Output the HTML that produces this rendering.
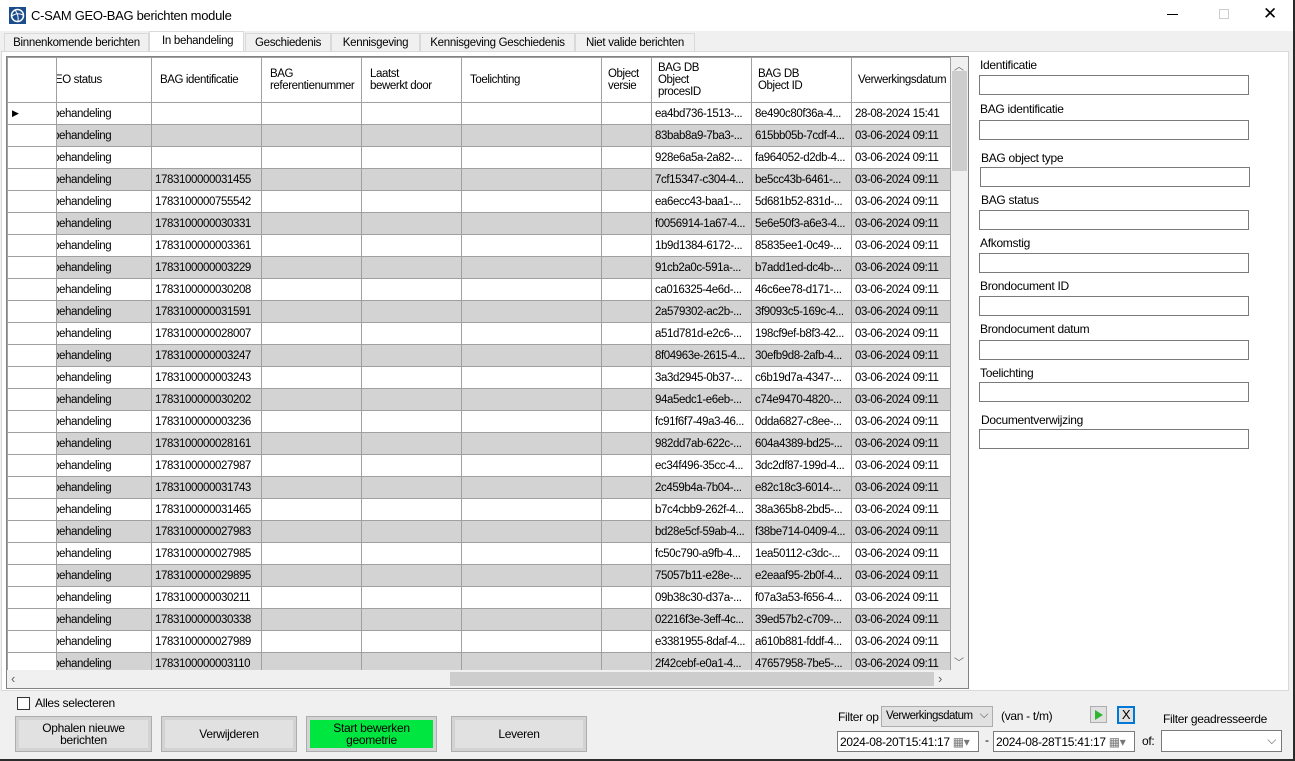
<!DOCTYPE html>
<html><head><meta charset="utf-8"><style>
*{box-sizing:border-box;margin:0;padding:0}
body{width:1295px;height:761px;position:relative;background:#f0f0f0;font-family:"Liberation Sans",sans-serif;font-size:12px;color:#000;overflow:hidden;letter-spacing:-0.3px}
.a{position:absolute}
#title{left:0;top:0;width:1295px;height:31px;background:#fff}
.tab{position:absolute;top:33px;height:18px;border:1px solid #d9d9d9;border-bottom:none;background:#f0f0f0;padding:3px 0 0 0;text-align:center;font-size:11.5px}
table{border-collapse:collapse;table-layout:fixed;position:absolute;left:7px;top:57px}
td{border:1px solid #a0a0a0;height:22px;padding:0 0 0 3px;white-space:nowrap;overflow:hidden;font-size:11.5px;letter-spacing:-0.4px}
th{border:1px solid #a0a0a0;height:45px;font-weight:normal;text-align:left;padding:0 0 0 8px;line-height:12px;font-size:11.5px;letter-spacing:-0.4px;vertical-align:middle;background:#fff;overflow:hidden;white-space:nowrap}
tr.g td{background:#d3d3d3}
td.rh{background:#fff!important;border-right:1px solid #a0a0a0}
td.c1{padding:0;text-indent:-4px}
.lbl{position:absolute;left:980px;font-size:12px}
.box{position:absolute;left:979px;width:270px;height:20px;border:1px solid #7a7a7a;background:#fff}
.btn{position:absolute;top:716px;height:36px;border:1px solid #adadad;background:#e1e1e1;outline:3px solid #d3d3d3;outline-offset:-4px;text-align:center;font-size:12px;line-height:12px;display:flex;align-items:center;justify-content:center}
</style></head><body>
<div class="a" id="title"></div>
<svg class="a" style="left:9px;top:7px" width="17" height="17" viewBox="0 0 17 17"><rect width="17" height="17" fill="#1b4d8c"/><circle cx="8.5" cy="8.5" r="6" fill="none" stroke="#fff" stroke-width="1.5"/><path d="M3 9 Q8 5 14 8 M6 3 Q10 8 9 15" stroke="#fff" fill="none"/></svg>
<div class="a" style="left:31px;top:8px;font-size:13px">C-SAM GEO-BAG berichten module</div>
<div class="a" style="left:1167px;top:14px;width:11px;height:1px;background:#000"></div>
<div class="a" style="left:1219px;top:9px;width:10px;height:10px;border:1px solid #ccc"></div>
<div class="a" style="left:1263px;top:4px;font-size:17px">✕</div>
<div class="tab" style="left:4px;width:145px">Binnenkomende berichten</div>
<div class="a" style="left:149px;top:31px;width:95px;height:21px;background:#fff;border:1px solid #d9d9d9;border-bottom:none;padding:3px 0 0 12px;font-size:11.5px">In behandeling</div>
<div class="tab" style="left:245px;width:86px">Geschiedenis</div>
<div class="tab" style="left:331px;width:89px">Kennisgeving</div>
<div class="tab" style="left:420px;width:155px">Kennisgeving Geschiedenis</div>
<div class="tab" style="left:575px;width:120px">Niet valide berichten</div>
<div class="a" style="left:1px;top:51px;width:1288px;height:640px;background:#fff;border:1px solid #d9d9d9"></div>
<div class="a" style="left:6px;top:56px;width:963px;height:633px;border:1px solid #828282;background:#fff"></div>
<table>
<colgroup><col style="width:49px"><col style="width:95px"><col style="width:110px"><col style="width:100px"><col style="width:100px"><col style="width:140px"><col style="width:50px"><col style="width:100px"><col style="width:100px"><col style="width:99px"></colgroup>
<tr><th></th><th style="padding-left:0;text-indent:-2px">EO status</th><th>BAG identificatie</th><th>BAG<br>referentienummer</th><th>Laatst<br>bewerkt door</th><th>Toelichting</th><th style="padding-left:6px">Object<br>versie</th><th style="padding-left:6px">BAG DB<br>Object<br>procesID</th><th style="padding-left:6px">BAG DB<br>Object ID</th><th style="padding-left:6px">Verwerkingsdatum</th></tr>
<tr><td class="rh" style="font-size:9px;padding-left:4px">▶</td><td class="c1">behandeling</td><td></td><td></td><td></td><td></td><td></td><td>ea4bd736-1513-...</td><td>8e490c80f36a-4...</td><td>28-08-2024 15:41</td></tr>
<tr class="g"><td class="rh"></td><td class="c1">behandeling</td><td></td><td></td><td></td><td></td><td></td><td>83bab8a9-7ba3-...</td><td>615bb05b-7cdf-4...</td><td>03-06-2024 09:11</td></tr>
<tr><td class="rh"></td><td class="c1">behandeling</td><td></td><td></td><td></td><td></td><td></td><td>928e6a5a-2a82-...</td><td>fa964052-d2db-4...</td><td>03-06-2024 09:11</td></tr>
<tr class="g"><td class="rh"></td><td class="c1">behandeling</td><td>1783100000031455</td><td></td><td></td><td></td><td></td><td>7cf15347-c304-4...</td><td>be5cc43b-6461-...</td><td>03-06-2024 09:11</td></tr>
<tr><td class="rh"></td><td class="c1">behandeling</td><td>1783100000755542</td><td></td><td></td><td></td><td></td><td>ea6ecc43-baa1-...</td><td>5d681b52-831d-...</td><td>03-06-2024 09:11</td></tr>
<tr class="g"><td class="rh"></td><td class="c1">behandeling</td><td>1783100000030331</td><td></td><td></td><td></td><td></td><td>f0056914-1a67-4...</td><td>5e6e50f3-a6e3-4...</td><td>03-06-2024 09:11</td></tr>
<tr><td class="rh"></td><td class="c1">behandeling</td><td>1783100000003361</td><td></td><td></td><td></td><td></td><td>1b9d1384-6172-...</td><td>85835ee1-0c49-...</td><td>03-06-2024 09:11</td></tr>
<tr class="g"><td class="rh"></td><td class="c1">behandeling</td><td>1783100000003229</td><td></td><td></td><td></td><td></td><td>91cb2a0c-591a-...</td><td>b7add1ed-dc4b-...</td><td>03-06-2024 09:11</td></tr>
<tr><td class="rh"></td><td class="c1">behandeling</td><td>1783100000030208</td><td></td><td></td><td></td><td></td><td>ca016325-4e6d-...</td><td>46c6ee78-d171-...</td><td>03-06-2024 09:11</td></tr>
<tr class="g"><td class="rh"></td><td class="c1">behandeling</td><td>1783100000031591</td><td></td><td></td><td></td><td></td><td>2a579302-ac2b-...</td><td>3f9093c5-169c-4...</td><td>03-06-2024 09:11</td></tr>
<tr><td class="rh"></td><td class="c1">behandeling</td><td>1783100000028007</td><td></td><td></td><td></td><td></td><td>a51d781d-e2c6-...</td><td>198cf9ef-b8f3-42...</td><td>03-06-2024 09:11</td></tr>
<tr class="g"><td class="rh"></td><td class="c1">behandeling</td><td>1783100000003247</td><td></td><td></td><td></td><td></td><td>8f04963e-2615-4...</td><td>30efb9d8-2afb-4...</td><td>03-06-2024 09:11</td></tr>
<tr><td class="rh"></td><td class="c1">behandeling</td><td>1783100000003243</td><td></td><td></td><td></td><td></td><td>3a3d2945-0b37-...</td><td>c6b19d7a-4347-...</td><td>03-06-2024 09:11</td></tr>
<tr class="g"><td class="rh"></td><td class="c1">behandeling</td><td>1783100000030202</td><td></td><td></td><td></td><td></td><td>94a5edc1-e6eb-...</td><td>c74e9470-4820-...</td><td>03-06-2024 09:11</td></tr>
<tr><td class="rh"></td><td class="c1">behandeling</td><td>1783100000003236</td><td></td><td></td><td></td><td></td><td>fc91f6f7-49a3-46...</td><td>0dda6827-c8ee-...</td><td>03-06-2024 09:11</td></tr>
<tr class="g"><td class="rh"></td><td class="c1">behandeling</td><td>1783100000028161</td><td></td><td></td><td></td><td></td><td>982dd7ab-622c-...</td><td>604a4389-bd25-...</td><td>03-06-2024 09:11</td></tr>
<tr><td class="rh"></td><td class="c1">behandeling</td><td>1783100000027987</td><td></td><td></td><td></td><td></td><td>ec34f496-35cc-4...</td><td>3dc2df87-199d-4...</td><td>03-06-2024 09:11</td></tr>
<tr class="g"><td class="rh"></td><td class="c1">behandeling</td><td>1783100000031743</td><td></td><td></td><td></td><td></td><td>2c459b4a-7b04-...</td><td>e82c18c3-6014-...</td><td>03-06-2024 09:11</td></tr>
<tr><td class="rh"></td><td class="c1">behandeling</td><td>1783100000031465</td><td></td><td></td><td></td><td></td><td>b7c4cbb9-262f-4...</td><td>38a365b8-2bd5-...</td><td>03-06-2024 09:11</td></tr>
<tr class="g"><td class="rh"></td><td class="c1">behandeling</td><td>1783100000027983</td><td></td><td></td><td></td><td></td><td>bd28e5cf-59ab-4...</td><td>f38be714-0409-4...</td><td>03-06-2024 09:11</td></tr>
<tr><td class="rh"></td><td class="c1">behandeling</td><td>1783100000027985</td><td></td><td></td><td></td><td></td><td>fc50c790-a9fb-4...</td><td>1ea50112-c3dc-...</td><td>03-06-2024 09:11</td></tr>
<tr class="g"><td class="rh"></td><td class="c1">behandeling</td><td>1783100000029895</td><td></td><td></td><td></td><td></td><td>75057b11-e28e-...</td><td>e2eaaf95-2b0f-4...</td><td>03-06-2024 09:11</td></tr>
<tr><td class="rh"></td><td class="c1">behandeling</td><td>1783100000030211</td><td></td><td></td><td></td><td></td><td>09b38c30-d37a-...</td><td>f07a3a53-f656-4...</td><td>03-06-2024 09:11</td></tr>
<tr class="g"><td class="rh"></td><td class="c1">behandeling</td><td>1783100000030338</td><td></td><td></td><td></td><td></td><td>02216f3e-3eff-4c...</td><td>39ed57b2-c709-...</td><td>03-06-2024 09:11</td></tr>
<tr><td class="rh"></td><td class="c1">behandeling</td><td>1783100000027989</td><td></td><td></td><td></td><td></td><td>e3381955-8daf-4...</td><td>a610b881-fddf-4...</td><td>03-06-2024 09:11</td></tr>
<tr class="g"><td class="rh"></td><td class="c1">behandeling</td><td>1783100000003110</td><td></td><td></td><td></td><td></td><td>2f42cebf-e0a1-4...</td><td>47657958-7be5-...</td><td>03-06-2024 09:11</td></tr>
</table>
<div class="a" style="left:951px;top:57px;width:17px;height:613px;background:#f0f0f0"></div>
<div class="a" style="left:952px;top:71px;width:15px;height:100px;background:#cdcdcd"></div>
<div class="a" style="left:954px;top:58px;font-size:10px;color:#606060">︿</div>
<div class="a" style="left:954px;top:654px;font-size:10px;color:#606060">﹀</div>
<div class="a" style="left:7px;top:670px;width:961px;height:18px;background:#f0f0f0"></div>
<div class="a" style="left:450px;top:672px;width:484px;height:14px;background:#cdcdcd"></div>
<div class="a" style="left:11px;top:671px;font-size:13px;color:#606060">‹</div>
<div class="a" style="left:938px;top:671px;font-size:13px;color:#606060">›</div>
<div class="a" style="left:951px;top:670px;width:17px;height:18px;background:#f0f0f0"></div>
<div class="lbl" style="top:58px">Identificatie</div><div class="box" style="top:75px"></div>
<div class="lbl" style="top:102px">BAG identificatie</div><div class="box" style="top:120px"></div>
<div class="lbl" style="top:151px;left:981px">BAG object type</div><div class="box" style="top:167px;left:980px"></div>
<div class="lbl" style="top:193px;left:981px">BAG status</div><div class="box" style="top:210px"></div>
<div class="lbl" style="top:236px">Afkomstig</div><div class="box" style="top:253px"></div>
<div class="lbl" style="top:279px">Brondocument ID</div><div class="box" style="top:296px"></div>
<div class="lbl" style="top:322px">Brondocument datum</div><div class="box" style="top:340px"></div>
<div class="lbl" style="top:366px">Toelichting</div><div class="box" style="top:382px"></div>
<div class="lbl" style="top:413px;left:981px">Documentverwijzing</div><div class="box" style="top:429px"></div>
<div class="a" style="left:1293px;top:0;width:2px;height:761px;background:#2b2b2b"></div>
<div class="a" style="left:0;top:759px;width:1295px;height:2px;background:#2b2b2b"></div>
<div class="a" style="left:17px;top:697px;width:13px;height:13px;border:1px solid #333;background:#fff"></div>
<div class="a" style="left:35px;top:696px">Alles selecteren</div>
<div class="btn" style="left:15px;width:137px">Ophalen nieuwe<br>berichten</div>
<div class="btn" style="left:161px;width:136px">Verwijderen</div>
<div class="btn" style="left:306px;width:131px;background:#00e640">Start bewerken<br>geometrie</div>
<div class="btn" style="left:451px;width:136px">Leveren</div>
<div class="a" style="left:838px;top:710px">Filter op</div>
<div class="a" style="left:881px;top:706px;width:112px;height:21px;border:1px solid #adadad;background:#e1e1e1;padding:3px 0 0 4px;font-size:11.5px;letter-spacing:-0.5px">Verwerkingsdatum <span style="position:absolute;right:4px;top:2px;color:#555">⌵</span></div>
<div class="a" style="left:1001px;top:709px">(van - t/m)</div>
<div class="a" style="left:1090px;top:706px;width:17px;height:17px;background:#e1e1e1;border:1px solid #adadad"></div>
<svg class="a" style="left:1094px;top:710px" width="10" height="10"><path d="M1 0L9 5L1 10Z" fill="#2fb62f"/></svg>
<div class="a" style="left:1117px;top:706px;width:18px;height:18px;border:2px solid #0078d7;background:#e1e1e1;text-align:center;line-height:14px;font-size:13px">X</div>
<div class="a" style="left:1163px;top:712px">Filter geadresseerde</div>
<div class="a" style="left:837px;top:731px;width:142px;height:21px;border:1px solid #7a7a7a;background:#fff;padding:3px 0 0 2px">2024-08-20T15:41:17 <span style="color:#777">▦▾</span></div>
<div class="a" style="left:985px;top:733px">-</div>
<div class="a" style="left:993px;top:731px;width:142px;height:21px;border:1px solid #7a7a7a;background:#fff;padding:3px 0 0 2px">2024-08-28T15:41:17 <span style="color:#777">▦▾</span></div>
<div class="a" style="left:1142px;top:734px">of:</div>
<div class="a" style="left:1161px;top:730px;width:121px;height:22px;border:1px solid #7a7a7a;background:#fff"><span style="position:absolute;right:5px;top:2px;color:#555">⌵</span></div>
</body></html>
